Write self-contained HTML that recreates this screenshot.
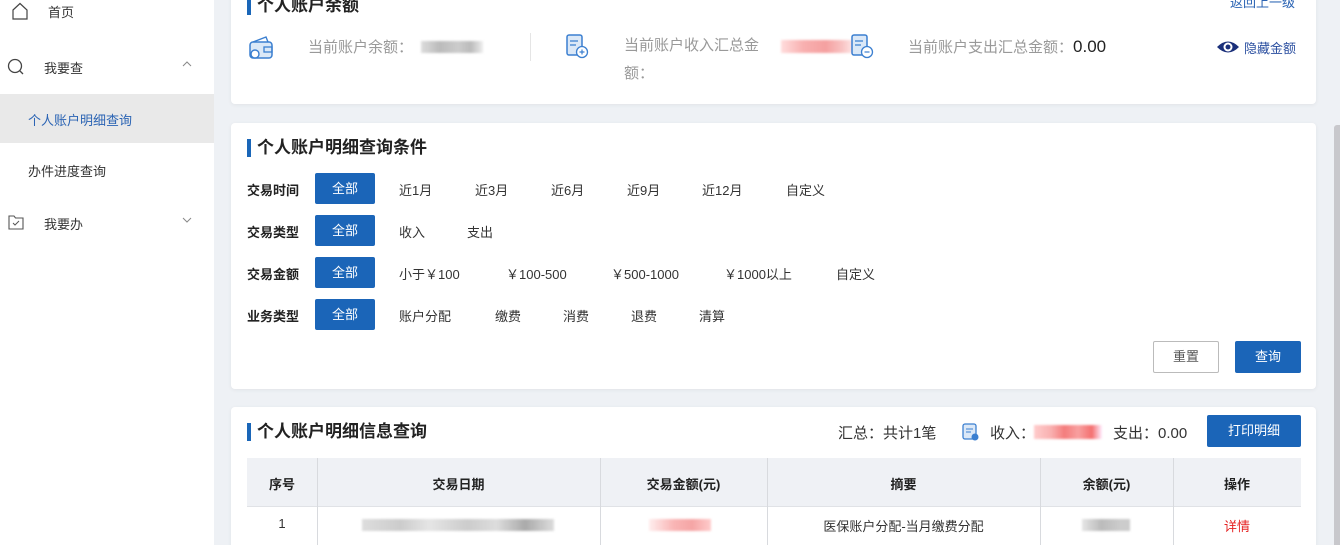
<!DOCTYPE html>
<html style="overflow:hidden;width:1340px;height:545px"><head><meta charset="utf-8"><style>
*{margin:0;padding:0;box-sizing:border-box}
body{width:1340px;height:545px;overflow:hidden;background:#eef1f5;font-family:"Liberation Sans","Noto Sans CJK SC",sans-serif;font-size:14px;color:#333;position:relative}
.abs{position:absolute}
.side{left:0;top:0;width:214px;height:545px;background:#fff}
.card{background:#fff;border-radius:4px;left:231px;width:1085px;box-shadow:0 1px 4px rgba(0,0,0,.06);overflow:hidden}
.tt{font-size:17px;font-weight:bold;color:#222;border-left:4px solid #1a66b8;padding-left:6px;line-height:18px}
.btn{background:#1b65b8;color:#fff;border-radius:2px;text-align:center}
.lbl{font-weight:bold;font-size:13px;color:#222}
.opt{font-size:13px;color:#333}
.blur{filter:blur(1px)}
</style></head><body>
<div class="abs side">
  <svg class="abs" style="left:11px;top:2px" width="18" height="18" viewBox="0 0 18 18"><path d="M2 8 L9 1.5 L16 8 V17 H2 Z" fill="none" stroke="#444" stroke-width="1.2"/></svg>
  <div class="abs" style="left:48px;top:2px;font-size:13px">首页</div>
  <svg class="abs" style="left:7px;top:58px" width="18" height="18" viewBox="0 0 18 18"><circle cx="8" cy="8" r="6.5" fill="none" stroke="#444" stroke-width="1.3"/><path d="M12.5 12.5 L16 16" stroke="#444" stroke-width="1.3"/></svg>
  <div class="abs" style="left:44px;top:58px;font-size:13px">我要查</div>
  <svg class="abs" style="left:182px;top:61px" width="10" height="6" viewBox="0 0 10 6"><path d="M1 5 L5 1 L9 5" fill="none" stroke="#888"/></svg>
  <div class="abs" style="left:0;top:94px;width:214px;height:49px;background:#e9e9e9"></div>
  <div class="abs" style="left:28px;top:110px;font-size:13px;color:#2b64b4">个人账户明细查询</div>
  <div class="abs" style="left:28px;top:161px;font-size:13px">办件进度查询</div>
  <svg class="abs" style="left:8px;top:215px" width="16" height="15" viewBox="0 0 16 15"><path d="M1 1 H6 L7.5 3 H15 V14 H1 Z" fill="none" stroke="#555" stroke-width="1.1"/><path d="M5 8 L7 10 L11 6" fill="none" stroke="#555"/></svg>
  <div class="abs" style="left:44px;top:214px;font-size:13px">我要办</div>
  <svg class="abs" style="left:182px;top:217px" width="10" height="6" viewBox="0 0 10 6"><path d="M1 1 L5 5 L9 1" fill="none" stroke="#888"/></svg>
</div>

<div class="abs card" style="top:-10px;height:114px">
  <div class="abs tt" style="left:16px;top:7px">个人账户余额</div>
  <div class="abs" style="left:999px;top:2px;font-size:13px;color:#2b64b4">返回上一级</div>
  <svg class="abs" style="left:17px;top:44px" width="28" height="28" viewBox="0 0 28 28"><rect x="2" y="8" width="22" height="16" rx="3" fill="#dbe8f7" stroke="#3b7fd0" stroke-width="1.5"/><path d="M5 8 L18 3 L20 8" fill="none" stroke="#3b7fd0" stroke-width="1.4"/><rect x="16" y="13" width="8" height="5" fill="none" stroke="#3b7fd0" stroke-width="1.3"/><circle cx="7" cy="20" r="4" fill="#fff" stroke="#3b7fd0" stroke-width="1.4"/></svg>
  <div class="abs" style="left:77px;top:46px;font-size:15px;color:#999">当前账户余额：</div>
  <div class="abs blur" style="left:190px;top:51px;width:62px;height:12px;background:linear-gradient(90deg,#ddd,#bbb 30%,#ccc 60%,#bbb 80%,#eee)"></div>
  <div class="abs" style="left:299px;top:43px;width:1px;height:28px;background:#e5e5e5"></div>
  <svg class="abs" style="left:333px;top:42px" width="26" height="28" viewBox="0 0 26 28"><rect x="3" y="3" width="15" height="20" rx="2" fill="#dbe8f7" stroke="#3b7fd0" stroke-width="1.5"/><path d="M6 9 H14 M6 13 H12" stroke="#3b7fd0" stroke-width="1.3"/><circle cx="18" cy="20" r="5.5" fill="#fff" stroke="#3b7fd0" stroke-width="1.3"/><path d="M15.5 20 H20.5 M18 17.5 V22.5" stroke="#3b7fd0" stroke-width="1.2"/></svg>
  <div class="abs" style="left:393px;top:42px;font-size:15px;color:#999;width:150px;line-height:28px">当前账户收入汇总金额：</div>
  <div class="abs blur" style="left:550px;top:50px;width:75px;height:13px;background:linear-gradient(90deg,#fdd,#f8b0b0 30%,#f5a0a0 60%,#f8c0c0 80%,#fee)"></div>
  <svg class="abs" style="left:618px;top:42px" width="26" height="28" viewBox="0 0 26 28"><rect x="3" y="3" width="15" height="20" rx="2" fill="#dbe8f7" stroke="#3b7fd0" stroke-width="1.5"/><path d="M6 9 H14 M6 13 H12" stroke="#3b7fd0" stroke-width="1.3"/><circle cx="18" cy="20" r="5.5" fill="#fff" stroke="#3b7fd0" stroke-width="1.3"/><path d="M15.5 20 H20.5" stroke="#3b7fd0" stroke-width="1.2"/></svg>
  <div class="abs" style="left:677px;top:46px;font-size:15px;color:#999">当前账户支出汇总金额：<span style="color:#222;font-size:17px">0.00</span></div>
  <svg class="abs" style="left:985px;top:49px" width="24" height="16" viewBox="0 0 24 16"><path d="M1 8 Q12 -3 23 8 Q12 19 1 8 Z" fill="#1a2f7a"/><circle cx="12" cy="8" r="4.5" fill="#fff"/><circle cx="12" cy="8" r="2.5" fill="#1a2f7a"/></svg>
  <div class="abs" style="left:1013px;top:48px;font-size:13px;color:#2b4fa0">隐藏金额</div>
</div>

<div class="abs card" style="top:123px;height:266px">
  <div class="abs tt" style="left:16px;top:16px">个人账户明细查询条件</div>
  <div class="abs lbl" style="left:16px;top:57px">交易时间</div>
  <div class="abs btn" style="left:84px;top:50px;width:60px;height:31px;line-height:31px;font-size:13px">全部</div>
  <div class="abs opt" style="left:168px;top:57px">近1月</div>
  <div class="abs opt" style="left:244px;top:57px">近3月</div>
  <div class="abs opt" style="left:320px;top:57px">近6月</div>
  <div class="abs opt" style="left:396px;top:57px">近9月</div>
  <div class="abs opt" style="left:471px;top:57px">近12月</div>
  <div class="abs opt" style="left:555px;top:57px">自定义</div>
  <div class="abs lbl" style="left:16px;top:99px">交易类型</div>
  <div class="abs btn" style="left:84px;top:92px;width:60px;height:31px;line-height:31px;font-size:13px">全部</div>
  <div class="abs opt" style="left:168px;top:99px">收入</div>
  <div class="abs opt" style="left:236px;top:99px">支出</div>
  <div class="abs lbl" style="left:16px;top:141px">交易金额</div>
  <div class="abs btn" style="left:84px;top:134px;width:60px;height:31px;line-height:31px;font-size:13px">全部</div>
  <div class="abs opt" style="left:168px;top:141px">小于￥100</div>
  <div class="abs opt" style="left:275px;top:141px">￥100-500</div>
  <div class="abs opt" style="left:380px;top:141px">￥500-1000</div>
  <div class="abs opt" style="left:493px;top:141px">￥1000以上</div>
  <div class="abs opt" style="left:605px;top:141px">自定义</div>
  <div class="abs lbl" style="left:16px;top:183px">业务类型</div>
  <div class="abs btn" style="left:84px;top:176px;width:60px;height:31px;line-height:31px;font-size:13px">全部</div>
  <div class="abs opt" style="left:168px;top:183px">账户分配</div>
  <div class="abs opt" style="left:264px;top:183px">缴费</div>
  <div class="abs opt" style="left:332px;top:183px">消费</div>
  <div class="abs opt" style="left:400px;top:183px">退费</div>
  <div class="abs opt" style="left:468px;top:183px">清算</div>
  <div class="abs" style="left:922px;top:218px;width:66px;height:32px;border:1px solid #bbb;border-radius:2px;text-align:center;line-height:30px;font-size:13px;color:#555">重置</div>
  <div class="abs btn" style="left:1004px;top:218px;width:66px;height:32px;line-height:32px;font-size:13px">查询</div>
</div>

<div class="abs card" style="top:407px;height:150px">
  <div class="abs tt" style="left:16px;top:16px">个人账户明细信息查询</div>
  <div class="abs" style="left:607px;top:15px;font-size:15px;color:#333">汇总：共计1笔</div>
  <svg class="abs" style="left:730px;top:15px" width="20" height="20" viewBox="0 0 20 20"><rect x="2" y="2" width="13" height="15" rx="2" fill="#dbe8f7" stroke="#3b7fd0" stroke-width="1.3"/><path d="M5 7 H12 M5 10 H10" stroke="#3b7fd0"/><circle cx="14" cy="15" r="3.5" fill="#3b7fd0"/></svg>
  <div class="abs" style="left:759px;top:15px;font-size:15px;color:#333">收入：</div>
  <div class="abs blur" style="left:803px;top:18px;width:68px;height:14px;background:linear-gradient(90deg,#fcc,#f9b0b0 25%,#f47c7c 45%,#f8a0a0 65%,#f47070 85%,#fef)"></div>
  <div class="abs" style="left:882px;top:15px;font-size:15px;color:#333">支出：0.00</div>
  <div class="abs btn" style="left:976px;top:8px;width:94px;height:32px;line-height:32px;font-size:13px">打印明细</div>
  <div class="abs" style="left:16px;top:51px;width:1054px;height:48px;background:#eff1f5"></div>
  <div class="abs" style="left:16px;top:99px;width:1054px;height:1px;background:#e0e2e6"></div>
  <div class="abs" style="left:86px;top:51px;width:1px;height:100px;background:#d8dade"></div>
  <div class="abs" style="left:369px;top:51px;width:1px;height:100px;background:#d8dade"></div>
  <div class="abs" style="left:536px;top:51px;width:1px;height:100px;background:#d8dade"></div>
  <div class="abs" style="left:809px;top:51px;width:1px;height:100px;background:#d8dade"></div>
  <div class="abs" style="left:942px;top:51px;width:1px;height:100px;background:#d8dade"></div>
  <div class="abs lbl" style="left:16px;width:70px;top:67px;text-align:center">序号</div>
  <div class="abs lbl" style="left:86px;width:283px;top:67px;text-align:center">交易日期</div>
  <div class="abs lbl" style="left:369px;width:167px;top:67px;text-align:center">交易金额(元)</div>
  <div class="abs lbl" style="left:536px;width:273px;top:67px;text-align:center">摘要</div>
  <div class="abs lbl" style="left:809px;width:133px;top:67px;text-align:center">余额(元)</div>
  <div class="abs lbl" style="left:942px;width:128px;top:67px;text-align:center">操作</div>
  <div class="abs" style="left:16px;width:70px;top:109px;text-align:center;font-size:13px">1</div>
  <div class="abs blur" style="left:131px;top:112px;width:192px;height:12px;background:linear-gradient(90deg,#ddd,#ccc 20%,#e5e5e5 35%,#ccc 55%,#ddd 70%,#aaa 85%,#ddd)"></div>
  <div class="abs blur" style="left:418px;top:112px;width:62px;height:12px;background:linear-gradient(90deg,#fee,#f9b5b5 40%,#f5a5a5 70%,#fcc)"></div>
  <div class="abs" style="left:536px;width:273px;top:109px;text-align:center;font-size:13px">医保账户分配-当月缴费分配</div>
  <div class="abs blur" style="left:851px;top:112px;width:48px;height:12px;background:linear-gradient(90deg,#e5e5e5,#bbb 40%,#ccc 80%,#ccc)"></div>
  <div class="abs" style="left:942px;width:128px;top:109px;text-align:center;font-size:13px;color:#e52222">详情</div>
</div>
<div class="abs" style="left:1334px;top:125px;width:6px;height:420px;background:#c8c8cc;border-radius:3px 0 0 0"></div>
</body></html>
